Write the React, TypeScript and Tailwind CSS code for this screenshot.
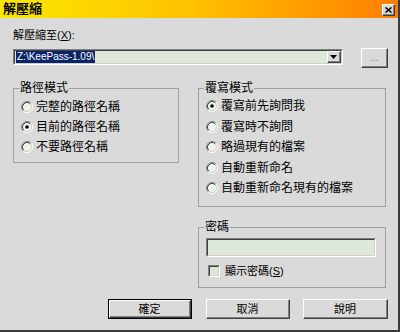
import React from 'react'

// classic sunken / raised edges
function Sunken({ className, children }: { className?: string; children?: React.ReactNode }) {
    return (
        <div className={`border-t border-l border-t-[#808080] border-l-[#808080] border-b border-r border-b-white border-r-white ${className ?? ''}`}>
            <div className="w-full h-full border-t border-l border-t-[#404040] border-l-[#404040] border-b border-r border-b-[#d4d0c8] border-r-[#d4d0c8] bg-[#dde8da] flex items-center">
                {children}
            </div>
        </div>
    )
}

function Raised({ className, children }: { className?: string; children?: React.ReactNode }) {
    return (
        <div className={`border-t border-l border-t-white border-l-white border-b border-r border-b-[#404040] border-r-[#404040] ${className ?? ''}`}>
            <div className="w-full h-full border-b border-r border-b-[#808080] border-r-[#808080] flex items-center justify-center">
                {children}
            </div>
        </div>
    )
}

function Radio({ checked }: { checked?: boolean }) {
    return (
        <svg width="12" height="12" viewBox="0 0 12 12" className="shrink-0">
            <circle cx="6" cy="6" r="4.2" fill="#eef3ec" />
            <path d="M2.11 9.89 A5.5 5.5 0 0 1 9.89 2.11" fill="none" stroke="#8a8a8a" strokeWidth="1" />
            <path d="M9.89 2.11 A5.5 5.5 0 0 1 2.11 9.89" fill="none" stroke="#ffffff" strokeWidth="1" />
            <path d="M2.82 9.18 A4.5 4.5 0 0 1 9.18 2.82" fill="none" stroke="#404040" strokeWidth="1" />
            <path d="M9.18 2.82 A4.5 4.5 0 0 1 2.82 9.18" fill="none" stroke="#d4d0c8" strokeWidth="1" />
            {checked && <circle cx="6" cy="6" r="1.8" fill="#000" />}
        </svg>
    )
}

function RadioRow({ label, checked, h }: { label: string; checked?: boolean; h: string }) {
    return (
        <div className={`flex items-center gap-[3px] ${h}`}>
            <Radio checked={checked} />
            <span className="text-[12px] leading-[14px]">{label}</span>
        </div>
    )
}

function App() {
    let pathModes = ["完整的路徑名稱", "目前的路徑名稱", "不要路徑名稱"]
    let overwriteModes = ["覆寫前先詢問我", "覆寫時不詢問", "略過現有的檔案", "自動重新命名", "自動重新命名現有的檔案"]

    return (
        <div className="w-[400px] h-[332px] bg-[#dadada] border-r-2 border-b-2 border-[#3c3c3c] flex flex-col overflow-hidden text-black font-['Liberation_Sans','Noto_Sans_CJK_TC',sans-serif]">
            {/* title bar */}
            <div className="h-[18px] shrink-0 flex items-start justify-between pl-[3px] pr-[3px] bg-linear-to-r from-[#f9e900] via-[#ffbf00] to-[#ff7d00]">
                <span className="text-[13px] leading-[17px] font-bold">解壓縮</span>
                <Raised className="w-[13px] h-[12px] mt-[4px] bg-[#dadada]">
                    <svg width="7" height="6" viewBox="0 0 7 6">
                        <path d="M0.5 0.5 L6.5 5.5 M6.5 0.5 L0.5 5.5" stroke="#000" strokeWidth="1.5" />
                    </svg>
                </Raised>
            </div>

            <div className="flex flex-col pl-[13px] pr-[10px]">
                <div className="mt-[10px] text-[11px] leading-[14px]">
                    解壓縮至(<span className="underline">X</span>):
                </div>

                <div className="mt-[6px] flex items-start h-[20px]">
                    <Sunken className="w-[330px] h-[16px] mt-[1px]">
                        <span className="ml-[1px] px-[1px] bg-[#0a246a] text-white text-[10px] leading-[12px]">Z:\KeePass-1.09\</span>
                        <Raised className="ml-auto w-[14px] h-full bg-[#dadada]">
                            <svg width="7" height="4" viewBox="0 0 7 4">
                                <path d="M0 0 H7 L3.5 4 Z" fill="#000" />
                            </svg>
                        </Raised>
                    </Sunken>
                    <Raised className="ml-auto w-[27px] h-[20px]">
                        <span className="text-[10px] leading-[10px] text-[#808080]">...</span>
                    </Raised>
                </div>

                <div className="mt-[13px] flex items-start">
                    <fieldset className="w-[166px] h-[82px] border border-[#a0a0a0] p-0 m-0">
                        <legend className="ml-[5px] px-[1px] text-[12px] leading-[14px]">路徑模式</legend>
                        <div className="pl-[7px] pt-[2px] flex flex-col">
                            {pathModes.map((m, i) => (
                                <RadioRow key={m} label={m} checked={i === 1} h="h-[20px]" />
                            ))}
                        </div>
                    </fieldset>

                    <div className="ml-[19px] w-[188px] flex flex-col">
                        <fieldset className="h-[126px] border border-[#a0a0a0] p-0 m-0">
                            <legend className="ml-[5px] px-[1px] text-[12px] leading-[14px]">覆寫模式</legend>
                            <div className="pl-[7px] pt-[1px] flex flex-col">
                                {overwriteModes.map((m, i) => (
                                    <RadioRow key={m} label={m} checked={i === 0} h="h-[20.5px]" />
                                ))}
                            </div>
                        </fieldset>

                        <fieldset className="mt-[13px] h-[68px] border border-[#a0a0a0] p-0 m-0">
                            <legend className="ml-[5px] px-[1px] text-[12px] leading-[14px]">密碼</legend>
                            <div className="pl-[7px] flex flex-col">
                                <Sunken className="mt-[4px] w-[170px] h-[19px]" />
                                <div className="mt-[7px] flex items-center gap-[5px] ml-[2px] h-[14px]">
                                    <Sunken className="w-[12px] h-[12px]" />
                                    <span className="text-[11px] leading-[14px]">顯示密碼(<span className="underline">S</span>)</span>
                                </div>
                            </div>
                        </fieldset>
                    </div>
                </div>

                <div className="mt-[11px] flex justify-end">
                    <div className="w-[84px] h-[20px] border border-black">
                        <Raised className="w-full h-full">
                            <span className="text-[11px] leading-[12px]">確定</span>
                        </Raised>
                    </div>
                    <Raised className="ml-[14px] w-[84px] h-[20px]">
                        <span className="text-[11px] leading-[12px]">取消</span>
                    </Raised>
                    <Raised className="ml-[13px] w-[85px] h-[20px]">
                        <span className="text-[11px] leading-[12px]">說明</span>
                    </Raised>
                </div>
            </div>
        </div>
    )
}

export default App
